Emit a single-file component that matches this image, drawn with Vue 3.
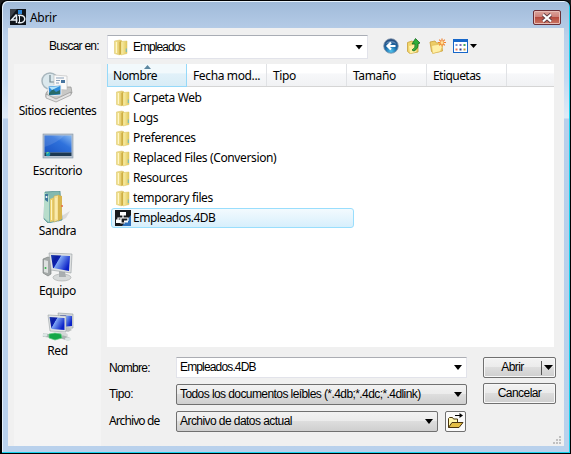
<script setup>
const columns = [
  { name: 'Nombre', cls: 'c0', sorted: true },
  { name: 'Fecha mod...', cls: 'c1' },
  { name: 'Tipo', cls: 'c2' },
  { name: 'Tamaño', cls: 'c2' },
  { name: 'Etiquetas', cls: 'c2 tight' },
  { name: '', cls: 'rest' },
]
const folders = ['Carpeta Web', 'Logs', 'Preferences', 'Replaced Files (Conversion)', 'Resources', 'temporary files']
const places = [
  { id: 'recent', name: 'Sitios recientes' },
  { id: 'desk', name: 'Escritorio' },
  { id: 'user', name: 'Sandra' },
  { id: 'pc', name: 'Equipo' },
  { id: 'net', name: 'Red' },
]
</script>

<template>
  <div class="window">
    <svg class="defs" width="0" height="0">
      <defs>
        <linearGradient id="gold" x1="0" x2="1" y1="0" y2="0">
          <stop offset="0" stop-color="#f3e491" /><stop offset=".5" stop-color="#e9d479" /><stop offset="1" stop-color="#d9b951" />
        </linearGradient>
        <linearGradient id="flap" x1="0" x2="1" y1="0" y2="0">
          <stop offset="0" stop-color="#f9efae" /><stop offset=".5" stop-color="#efdd83" /><stop offset="1" stop-color="#e0c761" />
        </linearGradient>
        <linearGradient id="screen" x1="0" y1="0" x2="1" y2=".5">
          <stop offset="0" stop-color="#1a3cae" /><stop offset=".3" stop-color="#0b1ca0" /><stop offset=".42" stop-color="#0d22b4" /><stop offset=".46" stop-color="#7ea6f4" /><stop offset="1" stop-color="#0c22c8" />
        </linearGradient>
        <linearGradient id="desk" x1="0" y1="1" x2="1" y2="0">
          <stop offset="0" stop-color="#1b55c4" /><stop offset=".6" stop-color="#2f72dc" /><stop offset="1" stop-color="#86b8f2" />
        </linearGradient>
        <radialGradient id="orb" cx=".5" cy=".85" r=".8">
          <stop offset="0" stop-color="#4fc3ef" /><stop offset=".5" stop-color="#1b6aa8" /><stop offset="1" stop-color="#274b7c" />
        </radialGradient>
        <symbol id="folder" viewBox="0 0 14 17">
          <path d="M.5 2 6 1l2 1v13l-3 .8-4.500-1.300z" fill="url(#gold)" stroke="#dcc66f" stroke-width=".6" />
          <path d="M5.500 3.500 7.500 1.500v13L5.500 16z" fill="#c9a63a" />
          <path d="M7 2.500 13 2v12.500L7 16z" fill="url(#flap)" stroke="#dcc45f" stroke-width=".5" />
          <path d="M2.500 3v11" stroke="#fff6c8" stroke-width="1.200" />
          <path d="M12.300 9.500v3.500" stroke="#63b9c9" stroke-width="1" />
        </symbol>
      </defs>
    </svg>

    <header class="titlebar">
      <svg class="logo" width="16" height="16" viewBox="0 0 16 16">
        <rect width="16" height="16" fill="#10151c" />
        <path d="M0 0h7L0 9z" fill="#3a4048" />
        <rect x="8" y="1" width="4" height="4" fill="#2c86d8" />
        <path d="M6.500 5.500 1.500 11h6M6.500 5.500v8.500M8 6.500c4-.8 6.800.7 6.800 3.500s-2.800 4.200-6.800 3.500" fill="none" stroke="#e8eef4" stroke-width="1.500" />
        <path d="M9.500 6v7" stroke="#e8eef4" />
      </svg>
      <span class="title">Abrir</span>
      <div class="close">
        <svg width="12" height="10" viewBox="0 0 12 10">
          <path d="M2 1.500 10 8.500M10 1.500 2 8.500" stroke="#5c3a40" stroke-width="3.800" />
          <path d="M2 1.500 10 8.500M10 1.500 2 8.500" stroke="#fff" stroke-width="2.200" />
        </svg>
      </div>
    </header>

    <main class="content">
      <div class="toolbar">
        <span class="lookin sans">Buscar en:</span>
        <div class="path">
          <svg class="fold" width="14" height="17"><use href="#folder" /></svg>
          <span class="sans">Empleados</span>
          <i class="arrow"></i>
        </div>
        <svg class="tools" width="96" height="18" viewBox="0 0 96 18">
          <circle cx="8" cy="9" r="7.300" fill="url(#orb)" stroke="#8295ab" stroke-width=".8" />
          <path d="M2.500 7a6 5 0 0 1 11 0q-5-3-11 0" fill="#86a8cb" opacity=".6" />
          <path d="M12.500 9H5M8 5.500 4.500 9 8 12.500" fill="none" stroke="#fff" stroke-width="2.200" />
          <path d="M24.500 5.500 29 4l2 1.500 4 .5v9l-8 1.500-2.500-2z" fill="#f0d56c" stroke="#c9a13a" stroke-width=".8" />
          <path d="m26 9 8-2-1 8-6 1.500z" fill="#fff0a4" />
          <path d="M29 13q4-2 3-6h-3l3.500-5.500L37 6l-2 .7q.5 5-4 7.300z" fill="#2fae38" stroke="#176b20" stroke-width=".8" />
          <path d="M47 5 52 4l1.500 2 5-.5 1 8.500-9 2-2-1.500z" fill="#edcd65" stroke="#c99e37" stroke-width=".8" />
          <path d="m48.500 8.500 12-2-3 8-8 2z" fill="#fff0a6" stroke="#dcb650" stroke-width=".6" />
          <path d="M59 1.500v8M55 5.500h8M56.200 2.700l5.600 5.600M61.800 2.700l-5.600 5.600" stroke="#f0812f" stroke-width="1.200" />
          <circle cx="59" cy="5.500" r="1.500" fill="#ffe39a" />
          <rect x="70.500" y="2.500" width="14" height="13" fill="#fff" stroke="#1767c9" />
          <rect x="70" y="2" width="15" height="3" fill="#1767c9" />
          <g>
            <path d="M72.500 8h2" stroke="#8094d0" stroke-width="2" /><path d="M76.500 8h2" stroke="#806cb8" stroke-width="2" /><path d="M80.500 8h2" stroke="#42a75b" stroke-width="2" />
            <path d="M72.500 12.500h2" stroke="#e87752" stroke-width="2" /><path d="M76.500 12.500h2" stroke="#303c86" stroke-width="2" /><path d="M80.500 12.500h2" stroke="#bd9834" stroke-width="2" />
          </g>
          <path d="M87 7h7l-3.500 4z" fill="#000" />
        </svg>
      </div>

      <div class="middle">
        <nav class="places">
          <div v-for="p in places" :key="p.id" class="place">
            <svg v-if="p.id === 'recent'" width="32" height="32" viewBox="0 0 32 32">
              <path d="m5 22 5-6h20l1 6-16 8-10-4z" fill="#c8c8c6" stroke="#8f918f" stroke-width=".7" />
              <circle cx="9" cy="10" r="8" fill="#dbe8ed" stroke="#a8b6bd" stroke-width="1.500" />
              <path d="M9 4v7h5" fill="none" stroke="#71868f" stroke-width="1.200" />
              <path d="m13 4 13 1v14l-13-1z" fill="#fafafa" stroke="#bbb" stroke-width=".6" />
              <path d="M15 7h8M15 9.500h4M15 12h3" stroke="#8aa0b8" /><path d="M20 9h4v3h-4z" fill="#4775a0" />
              <path d="m7 15 13-1v10l-12 1z" fill="#2f8cda" stroke="#eee" /><path d="m8 22 4-4 3 3 4-2v4L8 24z" fill="#276b69" /><path d="m8 16 11-1-8 4z" fill="#b4e4fa" />
              <path d="m5 23 10 5 15-7v3l-15 7-10-4z" fill="#e4e4e4" stroke="#888" stroke-width=".6" />
            </svg>
            <svg v-else-if="p.id === 'desk'" width="32" height="32" viewBox="0 0 32 32">
              <rect x="1" y="3" width="30" height="24" fill="#b8c2cf" stroke="#8496a8" stroke-width=".6" />
              <rect x="2.500" y="4.500" width="27" height="17" fill="url(#desk)" /><path d="M2.500 4.500h20Q15 12 2.500 16z" fill="#fff" opacity=".12" />
              <rect x="2.500" y="21.500" width="27" height="3.500" fill="#1c3852" /><circle cx="6" cy="23" r="2.300" fill="#1697b4" /><path d="M4.500 22h1.500v-1" stroke="#94df72" fill="none" />
            </svg>
            <svg v-else-if="p.id === 'user'" width="32" height="32" viewBox="0 0 32 32">
              <path d="M19 26 29 20l-4 7-8 4z" fill="#bbb" opacity=".45" />
              <path d="M4 1 19 0l2 29-14 3-4-4z" fill="#83b9b0" stroke="#4c8b8d" stroke-width=".7" />
              <path d="M3 1 8 5v26l-5-4z" fill="#b7ddcb" /><path d="M4 3h3v8l-3-2z" fill="#3e789c" /><circle cx="5.500" cy="6" r="1" fill="#fff" />
              <path d="m9 8 5-2v24l-5 1z" fill="#e9cd6b" /><path d="m13 5 5-1v25l-5 2z" fill="#f4e19a" stroke="#caa74a" stroke-width=".5" /><path d="m17 4 4 1v23l-4 2z" fill="#d8b650" />
              <path d="M15 7v21M10.500 9v20" stroke="#fff3bd" /><circle cx="21" cy="15" r="1" fill="#e36a43" />
            </svg>
            <svg v-else-if="p.id === 'pc'" width="32" height="32" viewBox="0 0 32 32">
              <path d="m2 8 5-2 3 1v16l-3 2-5-3z" fill="#a4a9a8" stroke="#717776" stroke-width=".6" /><path d="m3 9 4 1v12l-4-1z" fill="#dde0df" /><circle cx="4.500" cy="17" r="1" fill="#36b44a" />
              <ellipse cx="21" cy="26.500" rx="9" ry="3.500" fill="#d7dada" stroke="#a2a6a6" stroke-width=".6" /><path d="m18 20 6 1 1 5h-7z" fill="#a9aeb0" />
              <path d="m8 2 23 1-1 19-20-3z" fill="#dfe2e2" stroke="#969c9f" stroke-width=".6" /><path d="m10 4 19 1-1 15-16-3z" fill="url(#screen)" />
            </svg>
            <svg v-else width="32" height="32" viewBox="0 0 32 32">
              <path d="m16 2 15 1v14l-13 1z" fill="#d4d8da" stroke="#969da0" stroke-width=".6" /><path d="m18 4 12 1v10l-10 1z" fill="url(#screen)" />
              <path d="m20 18 6 3 4-2-4-3z" fill="#bcc0c0" />
              <path d="m6 4 18 1v16L8 20z" fill="#e3e6e6" stroke="#959da1" stroke-width=".6" /><path d="m7.500 6 15 1v12l-13-1z" fill="url(#screen)" />
              <ellipse cx="19" cy="24" rx="7" ry="3" fill="#d3d8d7" />
              <path d="m1 24 8 1M20 26l7 2" stroke="#a9b2b1" stroke-width="3.500" /><path d="m7 23 6-1 6 1 1 4-7 2-6-2z" fill="#13a747" stroke="#62c983" stroke-width=".7" /><ellipse cx="3" cy="24" rx="2.500" ry="1.800" fill="#dce7e5" /><ellipse cx="26" cy="28" rx="3" ry="1.800" fill="#dce7e5" />
            </svg>
            <span class="ui" :class="p.id">{{ p.name }}</span>
          </div>
        </nav>
        <section class="list">
          <div class="columns">
            <div v-for="c in columns" :key="c.name" class="col ui" :class="[c.cls, { sorted: c.sorted }]">
              <i v-if="c.sorted" class="up"></i>{{ c.name }}
            </div>
          </div>
          <div class="rows">
            <div v-for="f in folders" :key="f" class="row">
              <svg class="fold" width="14" height="17"><use href="#folder" /></svg>
              <span class="ui">{{ f }}</span>
            </div>
            <div class="row selected">
              <svg width="16" height="16" viewBox="0 0 16 16">
                <rect width="16" height="16" fill="#17191c" /><path d="M16 5v11H7z" fill="#2f72bd" />
                <path d="M8 5v3M3 11V8h10v3M6 8v5h4" fill="none" stroke="#fff" stroke-width="1.200" />
                <rect x="5" y="2" width="6" height="3.500" fill="#fff" /><rect x="1" y="9.500" width="5" height="3.500" fill="#fff" /><path d="M9 11.500h4" stroke="#fff" stroke-width="2" />
              </svg>
              <span class="ui">Empleados.4DB</span>
            </div>
          </div>
        </section>
      </div>

      <div class="form">
        <div class="labels">
          <span class="sans">Nombre:</span><span class="sans kind">Tipo:</span><span class="ui file">Archivo de</span>
        </div>
        <div class="fields">
          <div class="field edit"><span class="sans name">Empleados.4DB</span><i class="arrow"></i></div>
          <div class="field combo"><span class="sans type">Todos los documentos leíbles (*.4db;*.4dc;*.4dlink)</span><i class="arrow"></i></div>
          <div class="last">
            <div class="field combo small"><span class="sans data">Archivo de datos actual</span><i class="arrow"></i></div>
            <div class="browse">
              <svg width="17" height="17" viewBox="0 0 17 17">
                <path d="M1.500 14.500v-9l1-1h3l1 1.500h4v3" fill="#fff7ad" stroke="#49350f" />
                <path d="M1.500 14.500 5 9.500h11l-4 5z" fill="#e3bd45" stroke="#49350f" />
                <path d="M8 2.500h6" stroke="#000" /><path d="M12.500 0 16 2.500 12.500 5z" fill="#000" />
              </svg>
            </div>
          </div>
        </div>
        <div class="buttons">
          <div class="btn open"><span class="sans">Abrir</span><b></b><i class="arrow"></i></div>
          <div class="btn"><span class="sans">Cancelar</span></div>
        </div>
      </div>
      <svg class="grip" width="8" height="8" viewBox="0 0 8 8"><path d="M6 0h2v2H6zM3 3h2v2H3zM6 3h2v2H6zM0 6h2v2H0zM3 6h2v2H3zM6 6h2v2H6z" fill="#c0c0c0" /></svg>
    </main>
  </div>
</template>

<style>
html, body { background: #1d1d1f; overflow: hidden; }
</style>
<style scoped>
* { box-sizing: border-box; }
.window { position: relative; width: 571px; height: 454px; padding: 2px 6px 6px; border: solid #000; border-width: 1px 1px 1px 2px; border-radius: 7px 7px 0 0; background: linear-gradient(#a0bad9 0, #bad0ea 35px, #c4daf2 80px, #dfeaf6 117px, #b8cfeb 118px, #b9d1ec); box-shadow: inset -1px -1px #17d1ed, inset 1px 1px #e6f1fb; display: flex; flex-direction: column; color: #000; }
.defs { position: absolute; }
.titlebar { height: 25px; flex: none; display: flex; align-items: flex-start; padding: 6px 0 0 2px; }
.title { font: 12px/16px "Noto Sans", sans-serif; letter-spacing: -.3px; margin: 1px 0 0 4px; flex: 1; }
.close { width: 28px; height: 15px; margin: 1px 3px 0 0; border: 1px solid #6b2f37; border-radius: 2px; background: linear-gradient(#dba59c 0, #cf8179 45%, #b54b3e 50%, #cb7765); box-shadow: inset 0 0 0 1px #e7bcb5; display: flex; align-items: center; justify-content: center; }
.content { position: relative; height: 418px; background: #f0f0f0; display: flex; flex-direction: column; }
.toolbar { height: 36px; flex: none; padding-top: 7px; display: flex; align-items: flex-start; }
.sans { font-family: "Liberation Sans", sans-serif; font-size: 12px; line-height: 15px; letter-spacing: -.75px; white-space: nowrap; }
.ui { font: 12px/16px "Noto Sans", sans-serif; letter-spacing: -.37px; white-space: nowrap; }
.ui.tight { letter-spacing: -.55px; }
.ui.recent { letter-spacing: -.43px; }
.ui.file { letter-spacing: -.9px; }
.lookin { width: 99px; padding: 4px 0 0 41px; }
.path { width: 261px; height: 24px; border: 1px solid #e2e3ea; border-top-color: #a9adb5; background: #fff; display: flex; align-items: center; padding: 0 4px 0 6px; }
.path .sans { margin-left: 5px; flex: 1; letter-spacing: -.95px; }
.arrow { flex: none; width: 8px; height: 5px; background: #000; clip-path: polygon(0 0, 100% 0, 50% 100%); }
.tools { margin: 2px 0 0 15px; }
.middle { height: 283px; display: flex; flex: none; }
.places { width: 87px; height: 382px; margin-left: 6px; background: #f4f4f4; display: flex; flex-direction: column; align-items: center; padding-top: 7px; }
.place { height: 60px; flex: none; display: flex; flex-direction: column; align-items: center; }
.list { width: 447px; margin-left: 6px; background: #fff; }
.columns { height: 23px; display: flex; border-bottom: 1px solid #d5d5d5; background: linear-gradient(#fff 40%, #f7f8fa 45%, #f1f2f4); }
.col { position: relative; padding: 4px 0 0 6px; border-right: 1px solid #e0e2e5; width: 80px; }
.col.sorted { height: 23px; background: linear-gradient(#f2f9fc 40%, #e1f1f9 45%, #d8ecf6); border: 1px solid #96d9f9; border-top: 0; padding-left: 5px; letter-spacing: -.4px; }
.col.rest { flex: 1; border: 0; }
.up { position: absolute; left: 36px; top: 1px; width: 7px; height: 4px; background: #5c87a0; clip-path: polygon(50% 0, 100% 100%, 0 100%); }
.rows { padding: 1px 0 0 4px; }
.row { height: 20px; width: 243px; display: flex; align-items: center; padding-left: 5px; }
.row .fold { margin-right: 3px; }
.row.selected { border: 1px solid #99defd; border-radius: 3px; padding-left: 3px; background: linear-gradient(#f3fafe, #d7effc); }
.selected .ui { margin-left: 2px; letter-spacing: -.5px; }
.form { display: flex; padding: 10px 0 0 101px; }
.labels { width: 67px; display: flex; flex-direction: column; }
.labels span { height: 26px; padding-top: 4px; }
.labels .kind { letter-spacing: -.4px; }
.fields { width: 291px; display: flex; flex-direction: column; gap: 6px; }
.field { height: 21px; display: flex; align-items: center; padding: 0 4px 0 3px; border: 1px solid #707070; border-radius: 2px; background: linear-gradient(#f2f2f2 0, #ebebeb 48%, #dddddd 50%, #cfcfcf); }
.field span { flex: 1; }
.field .name { letter-spacing: -.85px; }
.field .type { letter-spacing: -.58px; }
.field .data { letter-spacing: -.56px; }
.field.edit { background: #fff; border: 1px solid #e2e3ea; border-top-color: #abadb3; border-radius: 0; }
.last { display: flex; gap: 7px; }
.small { width: 262px; }
.browse { width: 21px; height: 21px; border: 1px solid #707070; border-radius: 2px; background: #fafafa; display: flex; align-items: center; justify-content: center; }
.buttons { display: flex; flex-direction: column; gap: 5px; margin-left: 16px; }
.btn { width: 73px; height: 21px; border: 1px solid #707070; border-radius: 2px; background: linear-gradient(#f3f3f3, #ebebeb 48%, #dddddd 50%, #cfcfcf); box-shadow: inset 0 0 0 1px #f8f8f8; display: flex; align-items: center; justify-content: center; }
.btn .sans { letter-spacing: -.55px; }
.open span { width: 57px; text-align: center; }
.open b { width: 1px; height: 14px; background: #555; }
.open .arrow { margin: 0 2px; width: 9px; height: 5px; }
.grip { position: absolute; right: 3px; bottom: 2px; }
</style>
